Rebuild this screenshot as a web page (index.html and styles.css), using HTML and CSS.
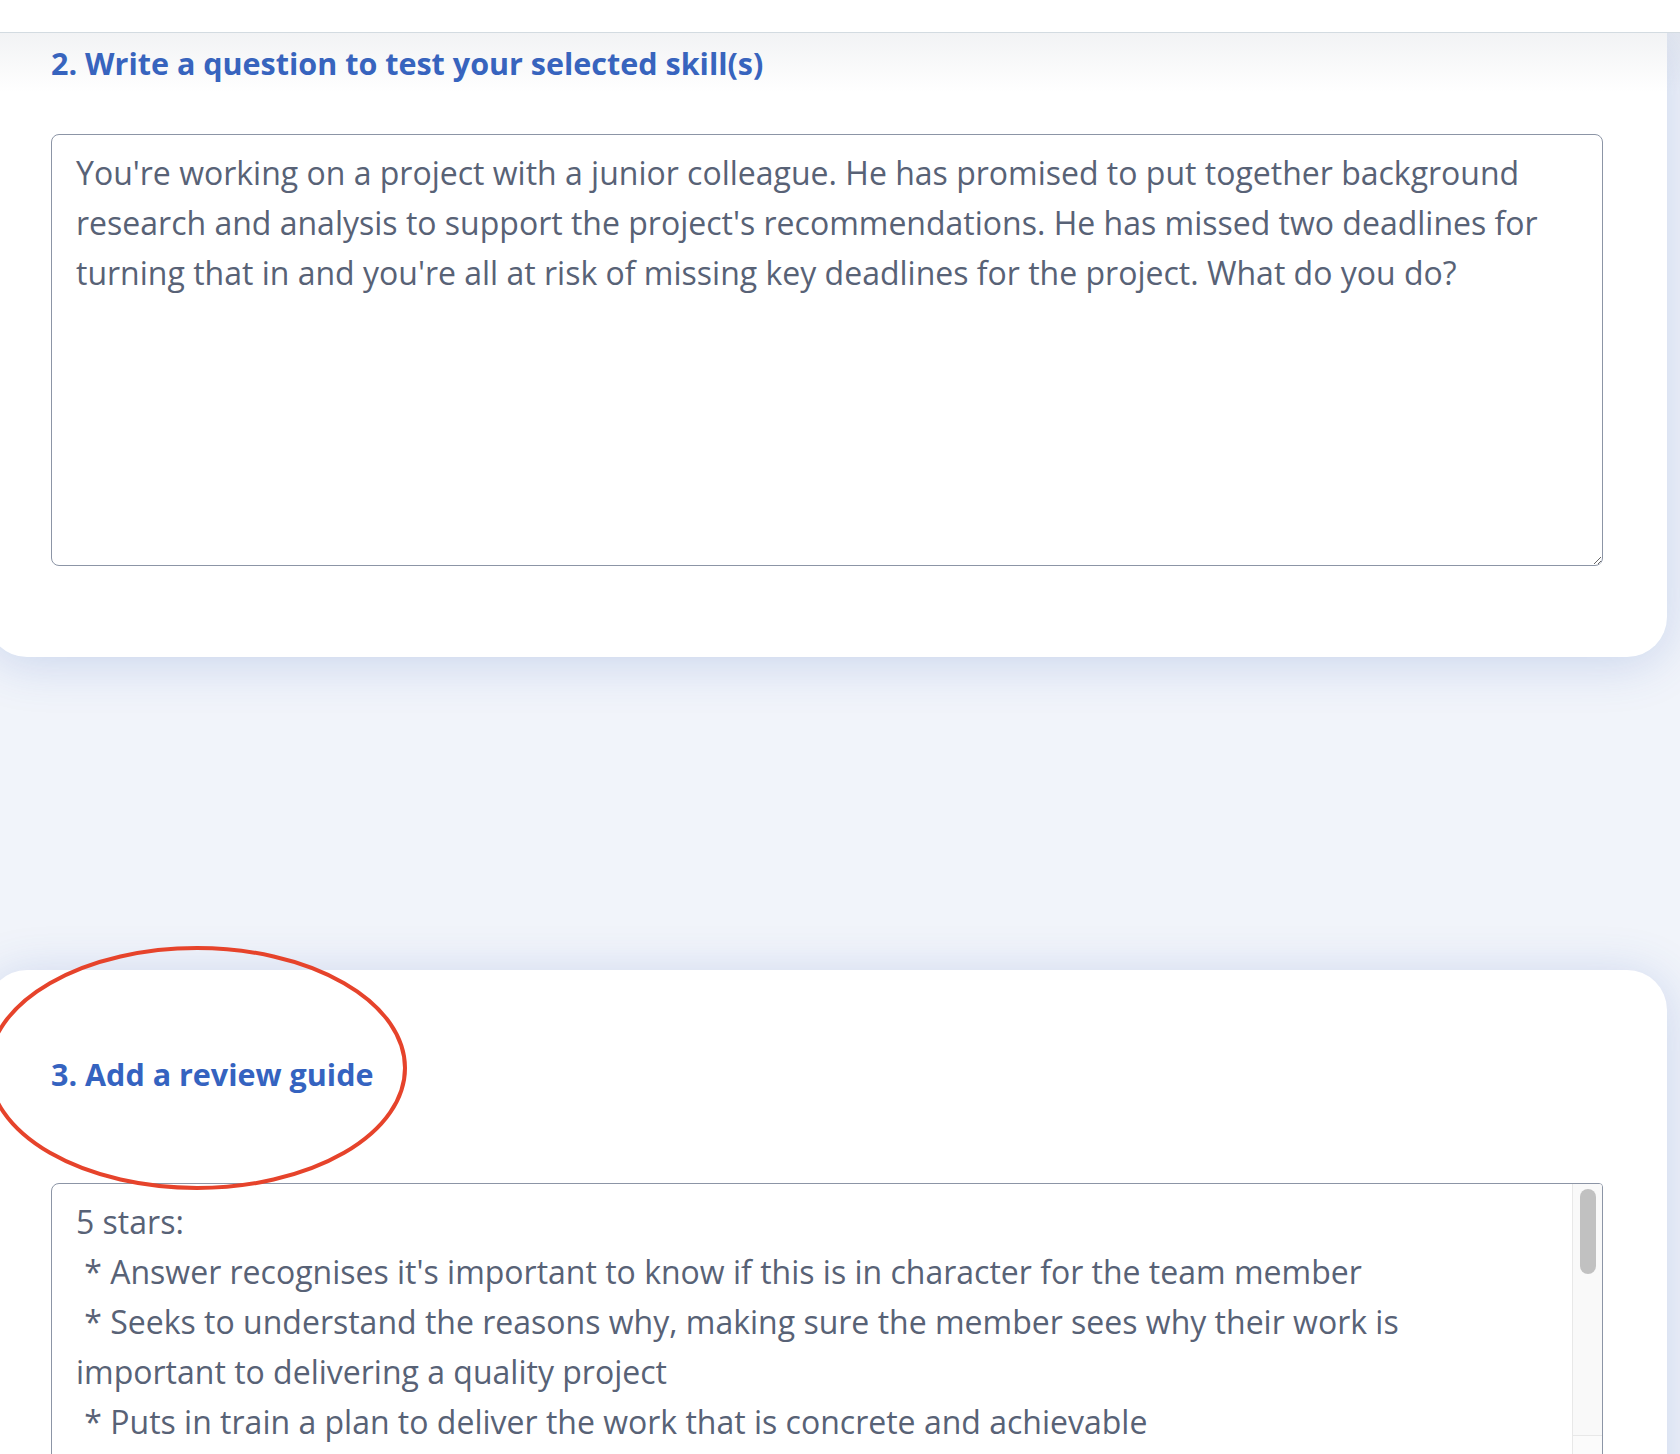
FILE: index.html
```html
<!DOCTYPE html>
<html lang="en">
<head>
<meta charset="utf-8">
<title>Create question</title>
<link rel="stylesheet" href="styles.css">
</head>
<body>
<header class="topbar"></header>
<main class="page">
  <section class="card card-first">
    <h2 class="step-title">2. Write a question to test your selected skill(s)</h2>
    <textarea class="field question">You're working on a project with a junior colleague. He has promised to put together background research and analysis to support the project's recommendations. He has missed two deadlines for turning that in and you're all at risk of missing key deadlines for the project. What do you do?</textarea>
  </section>
  <section class="card card-second">
    <h2 class="step-title">3. Add a review guide</h2>
    <div class="review-box">
      <textarea class="review">5 stars:
 * Answer recognises it's important to know if this is in character for the team member
 * Seeks to understand the reasons why, making sure the member sees why their work is important to delivering a quality project
 * Puts in train a plan to deliver the work that is concrete and achievable
 * Follows up to check progress and offers support where needed

3 stars:
 * Answer addresses the missed deadlines but doesn't explore the reasons behind them
 * Offers some support but the plan is vague

1 star:
 * Answer ignores the colleague's perspective
 * Escalates immediately or takes over the work without discussion</textarea>
      <div class="scrollbar" aria-hidden="true">
        <div class="track"><div class="thumb"></div></div>
        <div class="corner">
          <svg width="14" height="14" viewBox="0 0 14 14"><path d="M13 4 L4 13 M13 9 L9 13" stroke="#6b6b6b" stroke-width="1.3" fill="none"/></svg>
        </div>
      </div>
    </div>
  </section>
</main>
<svg class="annotation" width="440" height="270" viewBox="0 0 440 270" aria-hidden="true">
  <ellipse cx="212" cy="133" rx="208" ry="120" fill="none" stroke="#e6432b" stroke-width="4"/>
</svg>
</body>
</html>
```

FILE: styles.css
```css
html, body {
  margin: 0;
  padding: 0;
  height: 100%;
  overflow: hidden;
}

body {
  background: #f1f4fa;
  font-family: "Open Sans", "Liberation Sans", sans-serif;
  position: relative;
}

.topbar {
  position: relative;
  z-index: 3;
  height: 32px;
  background: #ffffff;
  border-bottom: 1px solid #d3dbe1;
}

.topbar::after {
  content: "";
  position: absolute;
  left: 0;
  right: 0;
  top: 33px;
  height: 60px;
  background: linear-gradient(rgba(110, 120, 140, 0.09), rgba(110, 120, 140, 0));
  pointer-events: none;
}

.page {
  display: flex;
  flex-direction: column;
}

.card {
  width: 1680px;
  margin-left: -13px;
  box-sizing: border-box;
  padding: 0 64px;
  background: #ffffff;
  border-radius: 40px;
  box-shadow: 0 6px 50px rgba(60, 100, 190, 0.22);
}

.card-first {
  border-radius: 0 0 40px 40px;
  padding-top: 9px;
  padding-bottom: 91px;
  position: relative;
  z-index: 1;
}

.card-second {
  margin-top: 313px;
  padding-top: 83px;
  padding-bottom: 60px;
}

.step-title {
  margin: 0;
  font-size: 30.5px;
  line-height: 42px;
  font-weight: 700;
  color: #3563c0;
  letter-spacing: 0;
}

.field {
  display: block;
  width: 100%;
  box-sizing: border-box;
  border: 1px solid #8c95a6;
  border-radius: 8px;
  padding: 13px 16px 13px 24px;
  font-family: "Open Sans", "Liberation Sans", sans-serif;
  font-size: 32px;
  line-height: 50px;
  color: #586276;
  background: #ffffff;
  outline: none;
  resize: vertical;
}

.question {
  margin-top: 50px;
  height: 432px;
  overflow: hidden;
}

.review-box {
  margin-top: 88px;
  height: 284px;
  box-sizing: border-box;
  border: 1px solid #8c95a6;
  border-radius: 8px 4px 8px 8px;
  background: #ffffff;
  display: flex;
  overflow: hidden;
}

.review {
  flex: 1;
  min-width: 0;
  border: none;
  margin: 0;
  padding: 13px 24px 13px 24px;
  font-family: "Open Sans", "Liberation Sans", sans-serif;
  font-size: 32px;
  line-height: 50px;
  color: #586276;
  background: transparent;
  outline: none;
  resize: none;
  overflow: hidden;
}

.scrollbar {
  width: 30px;
  display: flex;
  flex-direction: column;
}

.track {
  flex: 1;
  background: #f9f9f9;
  border-left: 1px solid #e8e8e8;
  padding: 5px 6px 0 7px;
}

.thumb {
  height: 85px;
  background: #c1c1c1;
  border-radius: 8px;
}

.corner {
  height: 30px;
  flex: none;
  background: #fbfbfb;
  border-top: 1px solid #e8e8e8;
  border-left: 1px solid #e8e8e8;
  display: flex;
  justify-content: flex-end;
  align-items: flex-end;
}

.annotation {
  position: absolute;
  left: -15px;
  top: 935px;
  z-index: 4;
  pointer-events: none;
}
```
